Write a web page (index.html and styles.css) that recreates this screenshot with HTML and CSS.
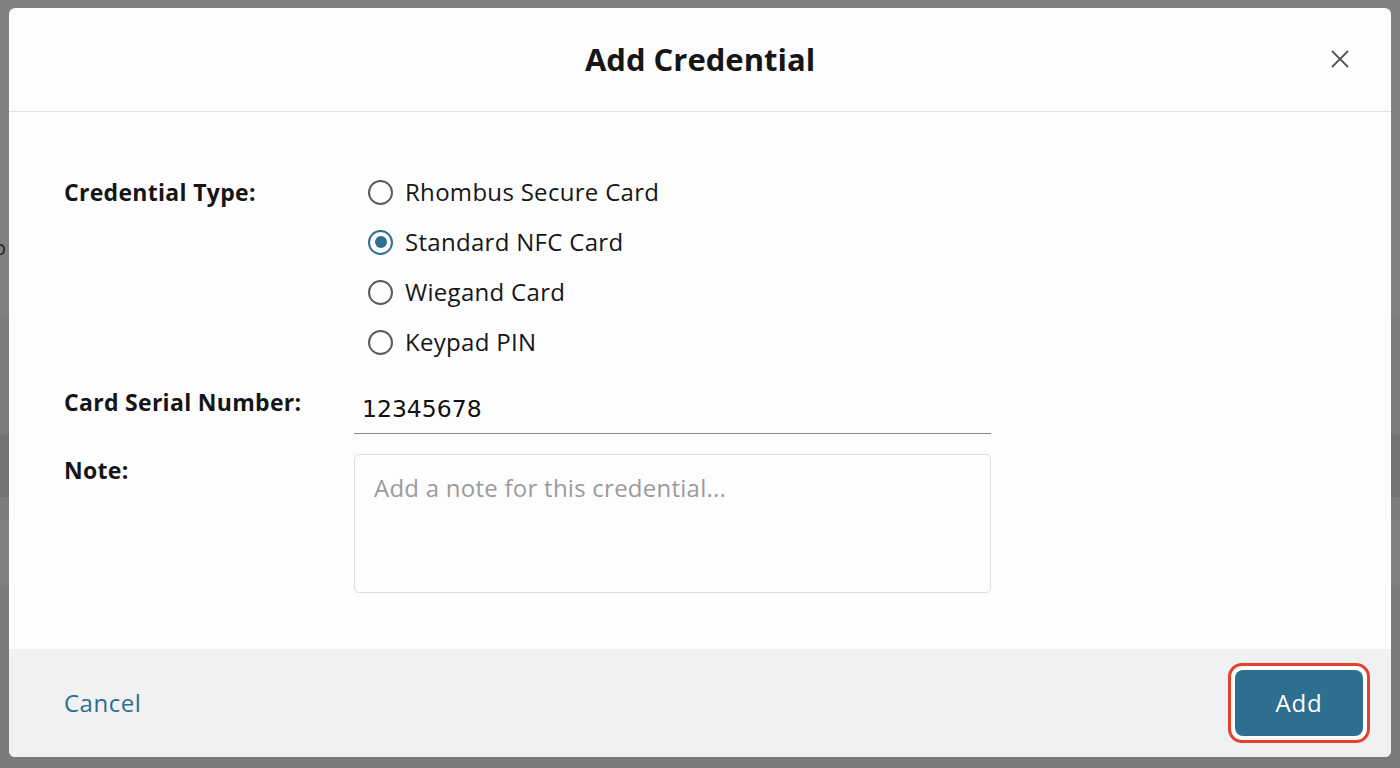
FILE: index.html
```html
<!DOCTYPE html>
<html lang="en">
<head>
<meta charset="utf-8">
<title>Add Credential</title>
<link rel="stylesheet" href="styles.css">
</head>
<body>
  <div class="backdrop">
    <span class="peek">o</span>
  </div>
  <div class="modal" role="dialog" aria-labelledby="modal-title">
    <header class="modal-header">
      <h2 id="modal-title" class="modal-title">Add Credential</h2>
      <button class="close-btn" aria-label="Close">
        <svg width="20" height="20" viewBox="0 0 20 20"><path d="M2 2 L18 18 M18 2 L2 18" stroke="#555" stroke-width="1.8" fill="none"/></svg>
      </button>
    </header>
    <section class="modal-body">
      <div class="field">
        <div class="label label-radio">Credential Type:</div>
        <div class="radio-list">
          <label class="radio"><span class="radio-dot"></span>Rhombus Secure Card</label>
          <label class="radio checked"><span class="radio-dot"></span>Standard NFC Card</label>
          <label class="radio"><span class="radio-dot"></span>Wiegand Card</label>
          <label class="radio"><span class="radio-dot"></span>Keypad PIN</label>
        </div>
      </div>
      <div class="field field-serial">
        <div class="label">Card Serial Number:</div>
        <div class="text-input">12345678</div>
      </div>
      <div class="field field-note">
        <div class="label">Note:</div>
        <div class="textarea"><span class="placeholder">Add a note for this credential...</span></div>
      </div>
    </section>
    <footer class="modal-footer">
      <button class="link-btn">Cancel</button>
      <span class="focus-ring"><button class="primary-btn">Add</button></span>
    </footer>
  </div>
</body>
</html>
```

FILE: styles.css
```css
html, body {
  margin: 0;
  padding: 0;
}

body {
  width: 1400px;
  height: 768px;
  overflow: hidden;
  position: relative;
  font-family: "Open Sans", Lato, sans-serif;
  color: #111;
  background: #808080;
}

/* dimmed page behind the dialog */
.backdrop {
  position: absolute;
  inset: 0;
  background:
    linear-gradient(to bottom,
      #808080 0, #808080 316px,
      #7b7c7d 316px, #7b7c7d 435px,
      #727476 435px, #727476 497px,
      #7d7d7d 497px, #7d7d7d 520px,
      #808080 520px, #808080 585px,
      #7b7b7b 585px, #7b7b7b 768px);
}

.peek {
  position: absolute;
  left: -6px;
  top: 234px;
  font-size: 20px;
  color: #222;
}

.modal {
  position: absolute;
  left: 9px;
  top: 8px;
  width: 1382px;
  height: 749px;
  background: #fdfdfe;
  border-radius: 6px;
  display: flex;
  flex-direction: column;
  overflow: hidden;
}

.modal-header {
  height: 103px;
  border-bottom: 1px solid #e2e3e5;
  display: flex;
  align-items: center;
  justify-content: center;
  position: relative;
  flex: none;
}

.modal-title {
  margin: 0 0 2px;
  font-size: 31px;
  font-weight: 700;
  color: #161616;
}

.close-btn {
  position: absolute;
  right: 41px;
  top: 41px;
  width: 20px;
  height: 20px;
  padding: 0;
  border: 0;
  background: none;
  display: flex;
}

.modal-body {
  flex: 1;
  padding: 54px 55px 0;
  display: flex;
  flex-direction: column;
}

.field {
  display: grid;
  grid-template-columns: 290px 637px;
}

.label {
  font-size: 23px;
  font-weight: 700;
  letter-spacing: 0.3px;
  line-height: 32px;
  color: #151515;
}

.label-radio {
  line-height: 52px;
}

.radio-list {
  display: flex;
  flex-direction: column;
}

.radio {
  height: 50px;
  display: flex;
  align-items: center;
  gap: 12px;
  padding-left: 14px;
  font-size: 24px;
  letter-spacing: 0.3px;
  color: #161616;
}

.radio-dot {
  width: 21px;
  height: 21px;
  border: 2px solid #5b5b5b;
  border-radius: 50%;
  box-sizing: content-box;
  display: flex;
  align-items: center;
  justify-content: center;
  flex: none;
  margin-top: 2px;
}

.radio.checked .radio-dot {
  border-color: #2e6e8f;
}

.radio.checked .radio-dot::after {
  content: "";
  width: 12px;
  height: 12px;
  border-radius: 50%;
  background: #2e6e8f;
}

.field-serial {
  margin-top: 20px;
}

.text-input {
  height: 47px;
  border-bottom: 1px solid #8a8a8a;
  padding-left: 8px;
  font-family: "DejaVu Sans", sans-serif;
  font-size: 23.5px;
  line-height: 47px;
  color: #111;
}

.field-note {
  margin-top: 20px;
}

.textarea {
  border: 1px solid #dcdde0;
  border-radius: 5px;
  padding: 16px 19px;
  box-sizing: border-box;
  height: 139px;
}

.placeholder {
  font-size: 24px;
  letter-spacing: 0.25px;
  color: #9b9b9b;
}

.modal-footer {
  height: 108px;
  flex: none;
  background: #f0f1f3;
  display: flex;
  align-items: center;
  justify-content: space-between;
  padding: 0 21px 0 55px;
}

.link-btn {
  border: 0;
  background: none;
  padding: 0 0 2px;
  font-family: inherit;
  font-size: 24px;
  letter-spacing: 0.5px;
  color: #2e6e8f;
}

.focus-ring {
  display: flex;
  padding: 4px;
  border: 3px solid #e5412b;
  border-radius: 14px;
  background: #fff;
}

.primary-btn {
  width: 128px;
  height: 66px;
  border: 0;
  border-radius: 8px;
  background: #2e6e8f;
  color: #fff;
  font-family: inherit;
  font-size: 24px;
  letter-spacing: 0.8px;
  padding: 0 0 2px;
}
```
